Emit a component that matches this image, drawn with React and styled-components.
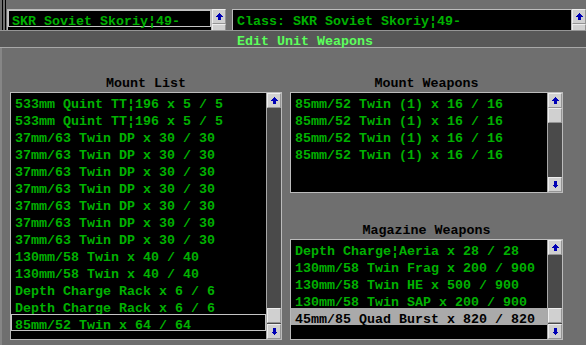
import React from 'react';
import styled, { createGlobalStyle } from 'styled-components';

const GlobalStyle = createGlobalStyle`
  html, body {
    margin: 0;
    padding: 0;
    width: 586px;
    height: 345px;
    overflow: hidden;
    background: #6f6f6f;
  }
  body {
    font-family: 'Liberation Mono', 'DejaVu Sans Mono', monospace;
    font-weight: bold;
    font-size: 13.33px;
  }
`;

const Screen = styled.div`
  width: 586px;
  height: 345px;
  display: flex;
  flex-direction: column;
  overflow: hidden;
  background: #6f6f6f;
`;

const TopBar = styled.div`
  height: 30px;
  flex: none;
  display: flex;
  align-items: flex-start;
  overflow: hidden;
`;

const Rail = styled.div`
  width: 3px;
  height: 30px;
  margin: 0 1px 0 2px;
  border-left: 1px solid #000;
  border-right: 1px solid #000;
`;

const Field = styled.div`
  display: flex;
  margin-top: 9px;
  margin-right: ${({ $gap }) => $gap || 0}px;
  height: 30px;
`;

const FieldText = styled.div`
  width: ${({ $w }) => $w}px;
  box-sizing: border-box;
  border: 1px solid #bcbcbc;
  border-bottom: none;
  background: #000;
`;

const FieldScroll = styled.div`
  width: 14px;
  display: flex;
  flex-direction: column;
`;

const Dialog = styled.div`
  flex: 1;
  display: flex;
  flex-direction: column;
`;

const TitleBar = styled.div`
  height: 18px;
  box-sizing: border-box;
  border-top: 1px solid #969696;
  border-bottom: 1px solid #a8a8a8;
  background: #585858;
  color: #5cff5c;
  text-align: center;
  padding: 3px 0 0 24px;
  line-height: 16px;
  white-space: pre;
`;

const Body = styled.div`
  flex: 1;
  box-shadow: inset 2px 0 0 #868686;
  padding: 27px 0 0 10px;
  display: grid;
  grid-template-columns: 272px 273px;
  column-gap: 8px;
  align-content: start;
`;

const Column = styled.div`
  display: flex;
  flex-direction: column;
`;

const Label = styled.div`
  height: 17px;
  line-height: 17px;
  text-align: center;
  color: #000;
  margin-top: ${({ $top }) => $top || 0}px;
  white-space: pre;
`;

const Box = styled.div`
  height: ${({ $h }) => $h}px;
  box-sizing: border-box;
  border: 1px solid #bcbcbc;
  background: #000;
  display: flex;
`;

const List = styled.div`
  flex: 1;
  overflow: hidden;
  display: flex;
  flex-direction: column;
`;

const Row = styled.div`
  height: 17px;
  flex: none;
  box-sizing: border-box;
  padding: 3px 0 0 4px;
  line-height: 17px;
  white-space: pre;
  color: ${({ $hl }) => ($hl ? '#000' : '#00b000')};
  background: ${({ $hl }) => ($hl ? '#aaaaaa' : 'transparent')};
  box-shadow: ${({ $outline }) => ($outline ? 'inset 0 0 0 1px #c4c4c4' : 'none')};
`;

const ScrollCol = styled.div`
  width: 14px;
  border-left: 1px solid #a8a8a8;
  background: #4a4a4a;
  display: flex;
  flex-direction: column;
`;

const Track = styled.div`
  flex: 1;
  display: flex;
  flex-direction: column;
  justify-content: ${({ $end }) => ($end ? 'flex-end' : 'flex-start')};
`;

const Btn = styled.div`
  width: 14px;
  height: 15px;
  flex: none;
  box-sizing: border-box;
  background: #d0d0d0;
  border: 1px solid;
  border-color: #eeeeee #949494 #949494 #eeeeee;
  display: flex;
  align-items: center;
  justify-content: center;
  margin-bottom: ${({ $mb }) => $mb || 0}px;
`;

const Arrow = ({ down }) => (
  <svg width="7" height="7" viewBox="0 0 7 7" shapeRendering="crispEdges"
    style={down ? { transform: 'rotate(180deg)' } : undefined}>
    <polygon points="3.5,0 7,3.5 5,3.5 5,7 2,7 2,3.5 0,3.5" fill="#0000b4" />
  </svg>
);

const Scroll = ({ thumbEnd }) => (
  <ScrollCol>
    <Btn><Arrow /></Btn>
    <Track $end={thumbEnd}>
      <Btn $mb={thumbEnd ? 1 : 0} />
    </Track>
    <Btn><Arrow down /></Btn>
  </ScrollCol>
);

const mounts = [
  '533mm Quint TT¦196 x 5 / 5',
  '533mm Quint TT¦196 x 5 / 5',
  '37mm/63 Twin DP x 30 / 30',
  '37mm/63 Twin DP x 30 / 30',
  '37mm/63 Twin DP x 30 / 30',
  '37mm/63 Twin DP x 30 / 30',
  '37mm/63 Twin DP x 30 / 30',
  '37mm/63 Twin DP x 30 / 30',
  '37mm/63 Twin DP x 30 / 30',
  '130mm/58 Twin x 40 / 40',
  '130mm/58 Twin x 40 / 40',
  'Depth Charge Rack x 6 / 6',
  'Depth Charge Rack x 6 / 6',
  '85mm/52 Twin x 64 / 64',
];

const mountWeapons = [
  '85mm/52 Twin (1) x 16 / 16',
  '85mm/52 Twin (1) x 16 / 16',
  '85mm/52 Twin (1) x 16 / 16',
  '85mm/52 Twin (1) x 16 / 16',
];

const magazine = [
  'Depth Charge¦Aeria x 28 / 28',
  '130mm/58 Twin Frag x 200 / 900',
  '130mm/58 Twin HE x 500 / 900',
  '130mm/58 Twin SAP x 200 / 900',
  '45mm/85 Quad Burst x 820 / 820',
];

export default function App() {
  return (
    <Screen>
      <GlobalStyle />
      <TopBar>
        <Rail />
        <Field $gap={6}>
          <FieldText $w={205}>
            <Row $outline>SKR Soviet Skoriy¦49-</Row>
          </FieldText>
          <FieldScroll>
            <Btn><Arrow /></Btn>
            <Btn />
          </FieldScroll>
        </Field>
        <Field>
          <FieldText $w={340}>
            <Row>Class: SKR Soviet Skoriy¦49-</Row>
          </FieldText>
          <FieldScroll>
            <Btn><Arrow /></Btn>
            <Btn />
          </FieldScroll>
        </Field>
      </TopBar>
      <Dialog>
        <TitleBar>Edit Unit Weapons</TitleBar>
        <Body>
          <Column>
            <Label>Mount List</Label>
            <Box $h={248}>
              <List>
                {mounts.map((m, i) => (
                  <Row key={i} $outline={i === mounts.length - 1}>{m}</Row>
                ))}
              </List>
              <Scroll thumbEnd />
            </Box>
          </Column>
          <Column>
            <Label>Mount Weapons</Label>
            <Box $h={101}>
              <List>
                {mountWeapons.map((m, i) => (
                  <Row key={i}>{m}</Row>
                ))}
              </List>
              <Scroll />
            </Box>
            <Label $top={29}>Magazine Weapons</Label>
            <Box $h={101}>
              <List>
                {magazine.map((m, i) => (
                  <Row key={i} $hl={i === magazine.length - 1}>{m}</Row>
                ))}
              </List>
              <Scroll thumbEnd />
            </Box>
          </Column>
        </Body>
      </Dialog>
    </Screen>
  );
}
